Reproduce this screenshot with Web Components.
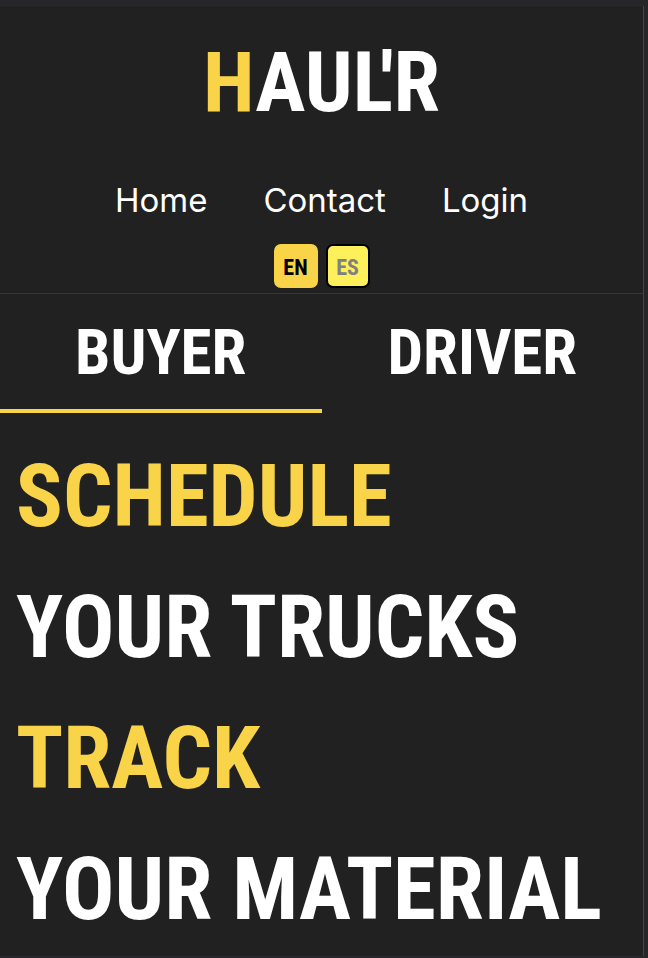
<!DOCTYPE html>
<html lang="en">
<head>
<meta charset="utf-8">
<title>HAUL'R</title>
<style>
  html { background: #25252a; }
  body { margin: 0; color: #fff; font-family: "Roboto Condensed", "Liberation Sans", sans-serif; }
</style>
</head>
<body>
<haulr-page>
  <haulr-header slot="header">
    <haulr-logo slot="logo"></haulr-logo>
    <haulr-link slot="nav" href="#home">Home</haulr-link>
    <haulr-link slot="nav" href="#contact">Contact</haulr-link>
    <haulr-link slot="nav" href="#login">Login</haulr-link>
    <haulr-lang slot="lang" active>EN</haulr-lang>
    <haulr-lang slot="lang">ES</haulr-lang>
  </haulr-header>
  <haulr-tabs slot="tabs">
    <haulr-tab active>BUYER</haulr-tab>
    <haulr-tab>DRIVER</haulr-tab>
  </haulr-tabs>
  <haulr-headline accent>SCHEDULE</haulr-headline>
  <haulr-headline>YOUR TRUCKS</haulr-headline>
  <haulr-headline accent>TRACK</haulr-headline>
  <haulr-headline>YOUR MATERIAL</haulr-headline>
</haulr-page>
<script>
  const define = (name, html, setup) => {
    const template = document.createElement("template");
    template.innerHTML = html;
    customElements.define(name, class extends HTMLElement {
      constructor() {
        super();
        this.attachShadow({ mode: "open" }).append(template.content.cloneNode(true));
      }
      connectedCallback() { if (setup) setup(this, this.shadowRoot); }
    });
  };

  define("haulr-page", `
    <style>
      :host { display: block; padding: 5px 4px 1px 0; --accent: #f9d448; --line: #37373a; }
      .frame { background: #212121; border: 1px solid #29292b; border-width: 1px 0; }
      .inner { border-right: 1px solid #454545; }
      main { padding: 18px 16px 1px; }
      h1 { margin: 0; font: inherit; }
    </style>
    <div class="frame"><div class="inner">
      <slot name="header"></slot>
      <slot name="tabs"></slot>
      <main><h1><slot></slot></h1></main>
    </div></div>`);

  define("haulr-header", `
    <style>
      :host { display: block; border-bottom: 1px solid var(--line); }
      header { display: flex; flex-direction: column; align-items: center; padding: 33px 16px 5px; }
      nav { display: flex; gap: 56px; margin-top: 53px; }
      .langs { display: flex; gap: 8px; margin-top: 24px; }
    </style>
    <header>
      <slot name="logo"></slot>
      <nav><slot name="nav"></slot></nav>
      <div class="langs" role="group" aria-label="Language"><slot name="lang"></slot></div>
    </header>`);

  define("haulr-logo", `
    <style>
      :host { display: block; }
      a { color: inherit; text-decoration: none; font-size: 84px; font-weight: 700; line-height: 88px; display: block; }
      .initial { color: var(--accent); }
      /* the wordmark's apostrophe tucks in above the foot of the L */
      .tuck { margin-left: -13px; }
    </style>
    <a href="#top"><span class="initial">H</span>AUL<span class="tuck">'</span>R</a>`);

  define("haulr-link", `
    <style>
      :host { display: block; }
      a { display: block; color: inherit; text-decoration: none; font: 400 33px/40px Inter, "Liberation Sans", sans-serif; }
    </style>
    <a><slot></slot></a>`,
    (el, root) => { root.querySelector("a").href = el.getAttribute("href"); });

  define("haulr-lang", `
    <style>
      :host { display: block; }
      button {
        display: block; box-sizing: border-box; width: 44px; height: 44px; margin: 0; padding: 4px 0 0;
        border: 2px solid #000; border-radius: 7px; background: #fdf05b; color: #808080;
        font: 700 22px/26px "Roboto Condensed", "Liberation Sans", sans-serif;
      }
      :host([active]) button { border-color: var(--accent); background: var(--accent); color: #000; }
    </style>
    <button type="button"><slot></slot></button>`,
    (el, root) => { root.querySelector("button").setAttribute("aria-pressed", el.hasAttribute("active")); });

  define("haulr-tabs", `
    <style>
      :host { display: grid; grid-template-columns: 1fr 1fr; }
    </style>
    <slot></slot>`);

  define("haulr-tab", `
    <style>
      :host { display: block; }
      button {
        display: block; box-sizing: border-box; width: 100%; margin: 0; padding: 22px 0 19px;
        border: 0; border-bottom: 4px solid transparent; background: none; color: inherit;
        font: 700 63px/74px "Roboto Condensed", "Liberation Sans", sans-serif;
      }
      :host([active]) button { border-bottom-color: var(--accent); }
    </style>
    <button type="button"><slot></slot></button>`,
    (el, root) => { root.querySelector("button").setAttribute("aria-pressed", el.hasAttribute("active")); });

  define("haulr-headline", `
    <style>
      :host { display: block; font-size: 87px; font-weight: 700; line-height: 131px; }
      :host([accent]) { color: var(--accent); }
    </style>
    <slot></slot>`);
</script>
</body>
</html>
